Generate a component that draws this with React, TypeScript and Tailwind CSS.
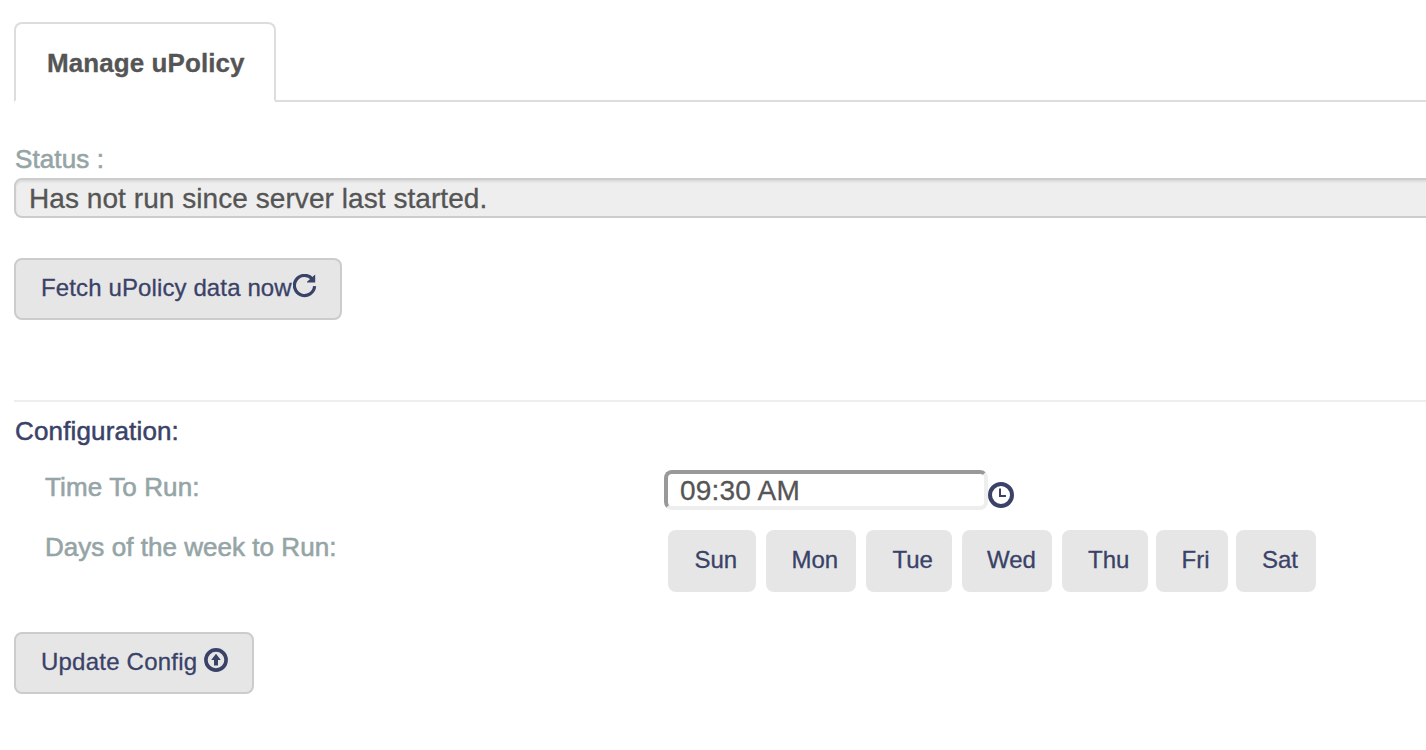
import React from "react";

const days = [
  { label: "Sun", box: "w-[88px] pl-[26.5px]" },
  { label: "Mon", box: "w-[90px] ml-[10px] pl-[25.5px]" },
  { label: "Tue", box: "w-[86px] ml-[10px] pl-[26.5px]" },
  { label: "Wed", box: "w-[90px] ml-[10px] pl-[25px]" },
  { label: "Thu", box: "w-[86px] ml-[10px] pl-[26px]" },
  { label: "Fri", box: "w-[72px] ml-[8px] pl-[25.5px]" },
  { label: "Sat", box: "w-[80px] ml-[8px] pl-[26px]" },
];

function RefreshIcon() {
  return (
    <svg className="mt-[14px] h-6 w-6 shrink-0" viewBox="0 0 24 24">
      <path d="M19.2 4.9A10.1 10.1 0 1 0 21.6 12.2" fill="none" stroke="#3a4268" strokeWidth="3.2" />
      <path d="M22.2 0.4V8.6H14V7.8Z" fill="#3a4268" />
    </svg>
  );
}

function ClockIcon() {
  return (
    <svg className="mt-[12px] h-[26px] w-[26px] shrink-0" viewBox="0 0 26 26">
      <circle cx="13" cy="13" r="11" fill="none" stroke="#3a4268" strokeWidth="4" />
      <path d="M12 6.5V14H18" fill="none" stroke="#3a4268" strokeWidth="2" />
    </svg>
  );
}

function UploadIcon() {
  return (
    <svg className="mt-[14px] h-6 w-6 shrink-0" viewBox="0 0 24 24">
      <circle cx="12" cy="12" r="10.1" fill="none" stroke="#3a4268" strokeWidth="3.6" />
      <path d="M12 5.8L16.8 12H14V17.5H10V12H7.2Z" fill="#3a4268" />
    </svg>
  );
}

export default function App() {
  return (
    <main className="h-[750px] overflow-hidden bg-white pl-[14px] pt-[22px] font-['Liberation_Sans',Arial,sans-serif] text-[26px] leading-[30px] text-[#3a4268]">
      <nav className="flex h-20">
        <div className="w-[262px] rounded-t-lg border-2 border-[#dddddd] border-b-transparent pl-[31px] pt-[24px] font-bold text-[#555555] [-webkit-text-stroke:0.3px_#555555]">
          <span className="whitespace-nowrap tracking-[0.08px]">Manage uPolicy</span>
        </div>
        <div className="-ml-px grow border-b-2 border-[#dddddd]" />
      </nav>

      <section className="h-[298px] pt-[42px]">
        <p className="h-[34px] pl-px tracking-[0.1px] text-[#95a5a6] [-webkit-text-stroke:0.6px_#95a5a6]">Status :</p>
        <div className="flex h-10 w-[1500px] items-center whitespace-nowrap rounded-lg border-2 border-[#cccccc] bg-[#eeeeee] pl-[13px] text-[28px] text-[#555555] shadow-[inset_0_2px_2px_rgba(0,0,0,0.075)] [-webkit-text-stroke:0.3px_#555555]">
          <span className="pt-[2px] tracking-[0.06px]">Has not run since server last started.</span>
        </div>
        <button className="mt-10 flex h-[62px] w-[328px] rounded-lg border-2 border-[#cccccc] bg-[#e6e6e6] pl-[25px] text-[24px] [-webkit-text-stroke:0.3px_#3a4268]">
          <span className="mt-[13px] w-[252px] whitespace-nowrap text-left tracking-[0.12px]">Fetch uPolicy data now</span>
          <RefreshIcon />
        </button>
      </section>

      <section className="border-t-2 border-[#eeeeee]">
        <h2 className="h-[68px] pl-px pt-[14px] tracking-[0.15px] [-webkit-text-stroke:0.5px_#3a4268]">Configuration:</h2>
        <div className="flex h-[60px] pl-[30px]">
          <label className="w-[620px] pl-px pt-[2px] tracking-[0.12px] text-[#95a5a6] [-webkit-text-stroke:0.6px_#95a5a6]">Time To Run:</label>
          <div className="flex h-10 w-[324px] items-center rounded-lg border-4 border-t-[#999999] border-r-[#eeeeee] border-b-[#eeeeee] border-l-[#999999] pl-3 text-[28px] text-[#555555] [-webkit-text-stroke:0.3px_#555555]">
            <span className="pt-[2px] tracking-[0.2px]">09:30 AM</span>
          </div>
          <ClockIcon />
        </div>
        <div className="flex h-[102px] pl-[30px]">
          <span className="w-[624px] pl-px pt-[2px] tracking-[0.04px] text-[#95a5a6] [-webkit-text-stroke:0.6px_#95a5a6]">Days of the week to Run:</span>
          <div className="flex text-[24px] [-webkit-text-stroke:0.3px_#3a4268]">
            {days.map((day) => (
              <button key={day.label} className={`flex h-[62px] shrink-0 rounded-lg bg-[#e6e6e6] pt-[15px] ${day.box}`}>
                <span>{day.label}</span>
              </button>
            ))}
          </div>
        </div>
        <button className="flex h-[62px] w-60 rounded-lg border-2 border-[#cccccc] bg-[#e6e6e6] pl-[25px] text-[24px] [-webkit-text-stroke:0.3px_#3a4268]">
          <span className="mt-[13px] w-[163px] whitespace-nowrap text-left tracking-[0.22px]">Update Config</span>
          <UploadIcon />
        </button>
      </section>
    </main>
  );
}
